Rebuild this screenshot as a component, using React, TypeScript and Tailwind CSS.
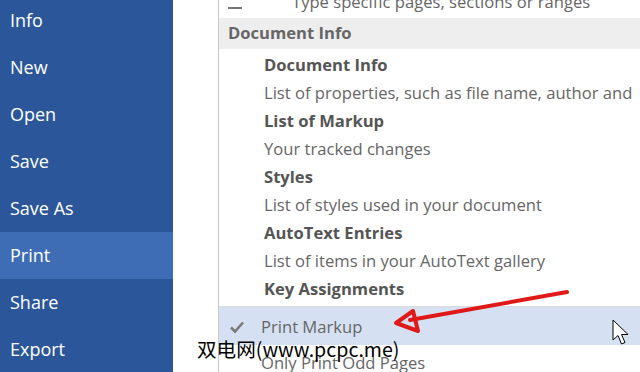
import React from 'react'

const menu = ['Info', 'New', 'Open', 'Save', 'Save As', 'Print', 'Share', 'Export']

const entries = [
    { title: 'Document Info', desc: 'List of properties, such as file name, author and' },
    { title: 'List of Markup', desc: 'Your tracked changes' },
    { title: 'Styles', desc: 'List of styles used in your document' },
    { title: 'AutoText Entries', desc: 'List of items in your AutoText gallery' },
    { title: 'Key Assignments', desc: '' },
]

export default function App() {
    return (
        <div
            className="relative flex h-[372px] w-[640px] overflow-hidden bg-white"
            style={{ fontFamily: '"Open Sans", "Noto Sans", sans-serif' }}
        >
            {/* Backstage sidebar */}
            <div className="w-[173px] shrink-0 bg-[#2b579a]">
                <div className="-mt-[3px]">
                    {menu.map(item => (
                        <div
                            key={item}
                            className={`flex h-[47px] items-center pl-[10px] text-[18px] text-white ${item === 'Print' ? 'bg-[#3e6db5]' : ''}`}
                        >
                            {item}
                        </div>
                    ))}
                </div>
            </div>

            <div className="w-[45px] shrink-0" />

            {/* Dropdown panel */}
            <div className="min-w-0 flex-1 border-l border-[#c8c8c8] text-[16.6px] text-[#666]">
                <div className="-mt-[12px] flex h-[28px] items-center whitespace-nowrap">
                    <div className="ml-[9px] mr-[50px] h-[14px] w-[14px] border-b-2 border-[#777]" />
                    Type specific pages, sections or ranges
                </div>
                <div className="mt-[2px] flex h-[31px] items-center bg-[#eeeeee] pl-[9px] font-bold text-[#666]">
                    Document Info
                </div>
                <div className="mt-[2px] pl-[45px]">
                    {entries.map(e => (
                        <React.Fragment key={e.title}>
                            <div className="flex h-[28px] items-center whitespace-nowrap font-bold text-[#555]">{e.title}</div>
                            {e.desc && (
                                <div className="flex h-[28px] items-center whitespace-nowrap text-[#666]">{e.desc}</div>
                            )}
                        </React.Fragment>
                    ))}
                </div>
                <div className="mt-[3px] border-t border-[#dcdcdc]" />
                <div className="flex h-[38px] items-center whitespace-nowrap bg-[#d5e1f2] pt-[2px] text-[#666]">
                    <svg className="ml-[10px] mr-[16px] h-[16px] w-[16px]" viewBox="0 0 16 16">
                        <path d="M2 8.5 L6 12.5 L14 3.5" fill="none" stroke="#7a7a7a" strokeWidth={2.6} />
                    </svg>
                    Print Markup
                </div>
                <div className="mt-[4px] flex h-[28px] items-center whitespace-nowrap pl-[42px] text-[#666]">
                    Only Print Odd Pages
                </div>
            </div>

            {/* Red arrow annotation */}
            <svg className="pointer-events-none absolute left-0 top-0" width={640} height={372}>
                <line x1={567} y1={292} x2={410} y2={320} stroke="#e01818" strokeWidth={4} strokeLinecap="round" />
                <polygon points="396,323 413,311 418,331" fill="none" stroke="#e01818" strokeWidth={4} strokeLinejoin="round" />
            </svg>

            {/* Mouse cursor */}
            <svg className="absolute left-[612px] top-[319px]" width={20} height={28} viewBox="0 0 20 28">
                <path d="M1 1 L1 21 L6 16.5 L9.5 25 L13 23.5 L9.5 15.5 L16 15.5 Z" fill="white" stroke="black" strokeWidth={1} strokeLinejoin="round" />
            </svg>

            {/* Watermark */}
            <div
                className="absolute left-[197px] top-[337px] whitespace-nowrap text-[19.6px] leading-[24px] text-black"
                style={{ fontFamily: '"Noto Sans CJK SC", sans-serif' }}
            >
                双电网(www.pcpc.me)
            </div>
        </div>
    )
}
